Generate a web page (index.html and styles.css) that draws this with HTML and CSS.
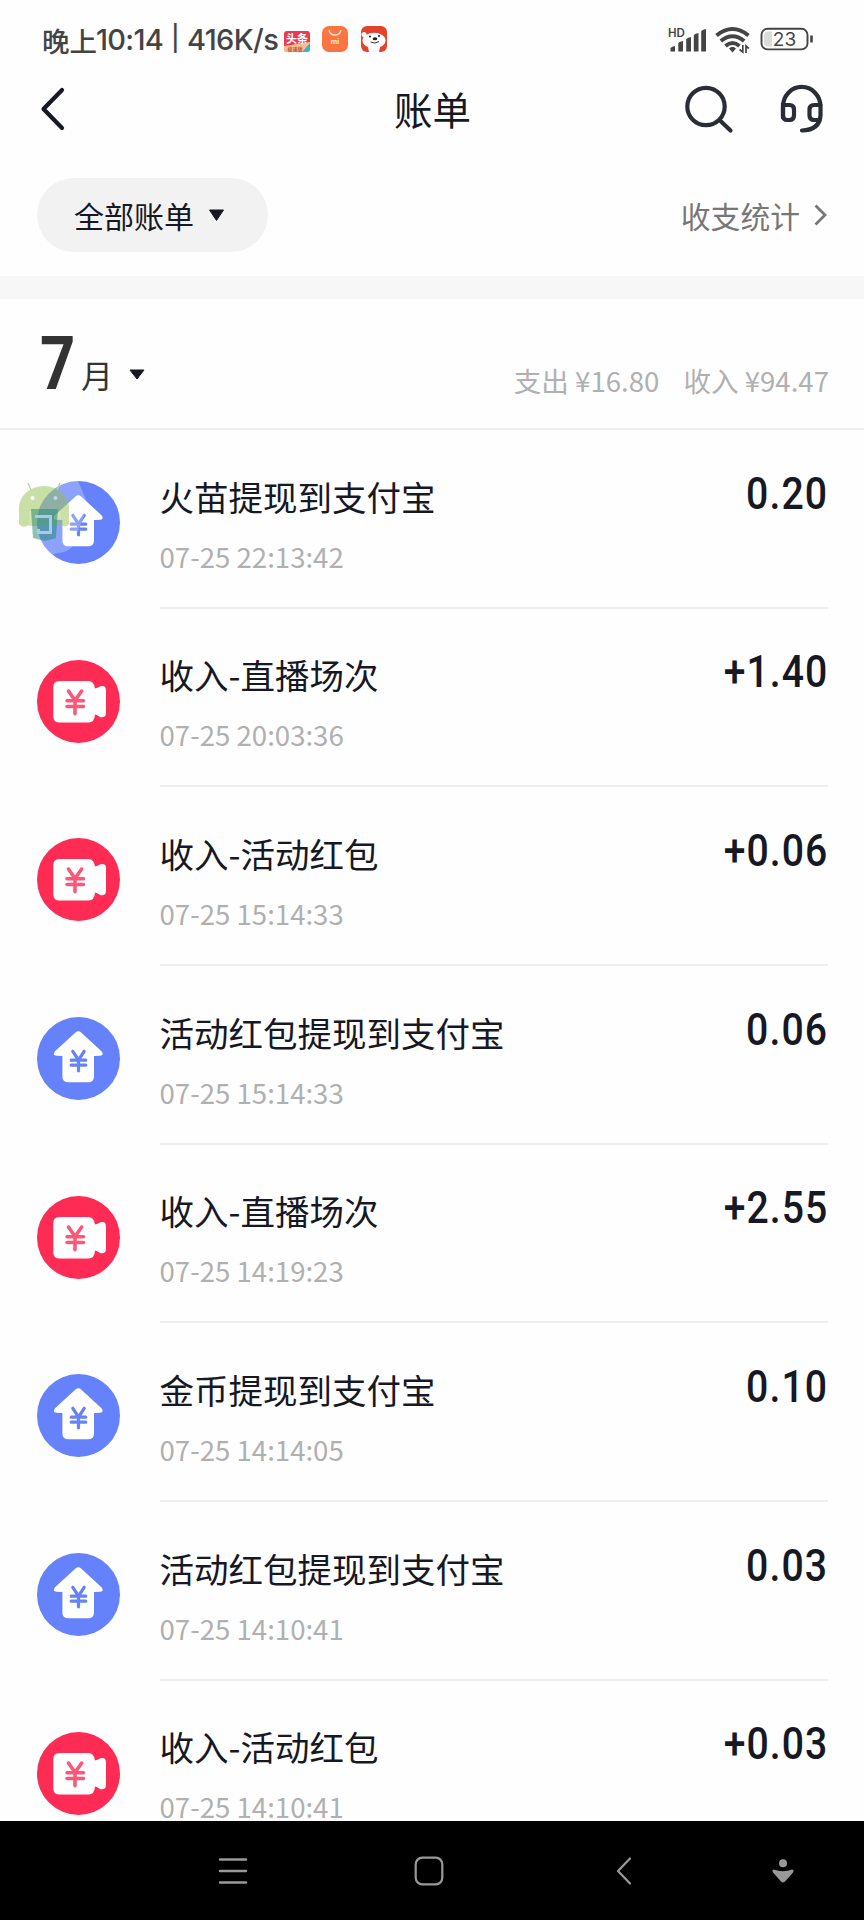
FILE: index.html
```html
<!DOCTYPE html>
<html lang="zh-CN">
<head>
<meta charset="utf-8">
<title>账单</title>
<link rel="stylesheet" href="styles.css">
</head>
<body>
<svg class="defs" aria-hidden="true">
  <symbol id="house" viewBox="0 0 83 83">
    <circle cx="41.5" cy="41.5" r="41.5" fill="#6682fb"/>
    <path d="M38.2 15.7Q41.3 13 44.4 15.7L64.5 34.2Q67.5 38.3 63 38.8L57 39V59.5Q57 65.3 51.2 65.3H31.2Q25.4 65.3 25.4 59.5V39L19.5 38.8Q15 38.3 18 34.2Z" fill="#fff"/>
    <path d="M35.8 34.3L41.5 43L47.2 34.3M41.5 43V53.8M34.2 43.2H48.8M34.2 48.2H48.8" fill="none" stroke="#6682fb" stroke-width="3.2" stroke-linecap="round"/>
  </symbol>
  <symbol id="camera" viewBox="0 0 83 83">
    <circle cx="41.5" cy="41.5" r="41.5" fill="#fe2c55"/>
    <path d="M22.5 21H51.5Q57 21 58 28.5Q60 28.3 63.5 26.3Q69 25 69 30.5V52.5Q69 58.5 63 57Q60 54.5 58 54.5Q57.5 62.6 51.5 62.6H22.5Q16.3 62.6 16.3 56.5V27Q16.3 21 22.5 21Z" fill="#fff"/>
    <path d="M31.5 31L38 40.5L44.7 31M38 40.5V53.8M30 40.8H46.5M30 46.6H46.5" fill="none" stroke="#fb5777" stroke-width="3.5" stroke-linecap="round"/>
  </symbol>
</svg>
<div class="phone">
  <header class="status">
    <div class="status-text"><span class="cn">晚上</span><span class="clock">10:14</span><span class="bar">|</span><span class="speed">416K/s</span></div>
    <svg class="apps" width="103" height="26" viewBox="0 0 103 26">
      <rect y="5" width="26" height="21" rx="3" fill="#ee3850"/>
      <path d="M0 20L26 16V23Q26 26 23 26H3Q0 26 0 23Z" fill="#f8bd91"/>
      <path d="M18 26L26 17V23Q26 26 23 26Z" fill="#35b6cd"/>
      <text x="13" y="16.5" class="app-news" text-anchor="middle">头条</text>
      <text x="11" y="24.8" class="app-sub" text-anchor="middle">极速版</text>
      <rect x="38" width="26" height="26" rx="7" fill="#fa7541"/>
      <path d="M45 4Q46 9 51 9Q56 9 57 4" fill="none" stroke="#ffe0cc" stroke-width="1.3"/>
      <text x="51" y="17.5" class="app-mi" text-anchor="middle">mi</text>
      <rect x="77" width="26" height="26" rx="6" fill="#e5412d"/>
      <ellipse cx="90" cy="14.5" rx="11.5" ry="7.8" fill="#fff"/>
      <circle cx="80" cy="8.5" r="2.5" fill="#fff"/>
      <path d="M84 21H96L95 26H85Z" fill="#fff"/>
      <circle cx="86" cy="10.5" r="1.1" fill="#222"/><circle cx="95" cy="10" r="1.1" fill="#222"/>
      <ellipse cx="91" cy="12.7" rx="2.3" ry="1.5" fill="#222"/>
      <path d="M86.5 16Q91 18.5 95 15.5" fill="none" stroke="#333"/>
    </svg>
    <svg class="signals" width="146" height="30" viewBox="0 0 146 30">
      <text x="0" y="11" class="hd">HD</text>
      <g fill="#444">
        <path d="M2.5 25.5V22Q4 20.5 7 20V25.5ZM10.3 25.5V17Q12 15.5 15 15V25.5ZM18.2 25.5V13Q20 11.5 23 11V25.5ZM25.8 25.5V9Q27.5 7.5 30.5 7V25.5ZM33.2 25.5V5Q35 3.5 38 3V25.5Z"/>
      </g>
      <g fill="none" stroke="#444" stroke-width="4">
        <path d="M48.5 9.5Q64.5 -3.5 80.5 9.5M52.8 15Q64.5 5.5 76.2 15M57.5 20Q64.5 14 71.5 20"/>
      </g>
      <path d="M61 22.5Q64.5 19 68 22.5L64.5 26.5Z" fill="#444"/>
      <path d="M74.8 19V26L71.5 23.5M78 27V20L80.8 22.5" fill="none" stroke="#444" stroke-width="1.7"/>
      <rect x="93.5" y="2.8" width="46" height="20.6" rx="6" fill="none" stroke="#444" stroke-width="1.9"/>
      <path d="M100 5.5H104V20.5H100Q96 20.5 96 16.5V9.5Q96 5.5 100 5.5Z" fill="#dcdcdc"/>
      <text x="116.5" y="19.6" class="level" text-anchor="middle">23</text>
      <path d="M143.5 9.5V16.5" stroke="#444" stroke-width="2.6"/>
    </svg>
  </header>

  <nav class="titlebar">
    <svg class="back" width="26" height="44" viewBox="0 0 26 44"><path d="M22 3L3.5 22L22 41" fill="none" stroke="#161823" stroke-width="4.2" stroke-linecap="round" stroke-linejoin="round"/></svg>
    <h1 class="title">账单</h1>
    <svg class="tools" width="138" height="50" viewBox="0 0 138 50" fill="none" stroke="#2a2c37" stroke-width="4.2" stroke-linecap="round">
      <circle cx="19" cy="21.5" r="18.7"/><path d="M33 35.5L43.5 45.5"/>
      <path d="M96 32.5V21.5A18.7 19.5 0 0 1 133.5 21.5V30.5Q132.500 45 115 45.5"/>
      <path d="M96 20H102.5Q107 20 107 24.5V30.5Q107 35 102.5 35H100Q96 35 96 30.5ZM133.5 20H127Q122.5 20 122.5 24.5V30.5Q122.5 35 127 35H132.5"/>
    </svg>
  </nav>

  <section class="filters">
    <div class="pill"><span>全部账单</span><svg width="17" height="13" viewBox="0 0 17 13"><path d="M1.5 1H15.5L8.5 11.5Z" fill="#161823" stroke="#161823" stroke-linejoin="round"/></svg></div>
    <div class="stats"><span>收支统计</span><svg width="14" height="24" viewBox="0 0 14 24"><path d="M1.5 2.5L11 12L1.5 21.5" fill="none" stroke="#777" stroke-width="2.8"/></svg></div>
  </section>

  <section class="month">
    <div class="month-pick"><span class="num">7</span><span class="unit">月</span><svg width="16" height="11" viewBox="0 0 16 11"><path d="M1 1H15L8 10Z" fill="#161823" stroke="#161823" stroke-linejoin="round"/></svg></div>
    <div class="totals"><span>支出 ¥16.80</span><span>收入 ¥94.47</span></div>
  </section>

  <main class="list">
    <article class="row"><svg class="icon"><use href="#house"/></svg><div class="body"><div class="info"><div class="name">火苗提现到支付宝</div><div class="time">07-25 22:13:42</div></div><div class="amount">0.20</div></div>
      <svg class="floating" width="80" height="90" viewBox="15 478 80 90">
        <defs><clipPath id="disc"><circle cx="78.5" cy="522.5" r="41.5"/></clipPath></defs>
        <path d="M35 478H77L88 505L72 547Q66 555 35 555Z" fill="#fff" opacity=".26" clip-path="url(#disc)"/>
        <path d="M19 524V508A25 22 0 0 1 69 508V524Q65 529 61 524V511H29V525Q23 529 19 524Z" fill="#8fbf45" opacity=".48"/>
        <path d="M29 511H61V526H29Z" fill="#8fbf45" opacity=".4"/>
        <path d="M31 490L28 483M57 490L60 483" stroke="#b8d98b" stroke-width="1.3"/>
        <circle cx="32.5" cy="498" r="2" fill="#fff"/><circle cx="55.5" cy="498" r="2" fill="#c1d7f0"/>
        <path d="M31 509H58L56 538L45 541L33 538Z" fill="#258a70" opacity=".52"/>
        <path d="M35 516.5H50.5V532.5H38.500V529" fill="none" stroke="#a9caef" stroke-width="3"/>
      </svg>
    </article>
    <article class="row"><svg class="icon"><use href="#camera"/></svg><div class="body"><div class="info"><div class="name">收入-直播场次</div><div class="time">07-25 20:03:36</div></div><div class="amount">+1.40</div></div></article>
    <article class="row"><svg class="icon"><use href="#camera"/></svg><div class="body"><div class="info"><div class="name">收入-活动红包</div><div class="time">07-25 15:14:33</div></div><div class="amount">+0.06</div></div></article>
    <article class="row"><svg class="icon"><use href="#house"/></svg><div class="body"><div class="info"><div class="name">活动红包提现到支付宝</div><div class="time">07-25 15:14:33</div></div><div class="amount">0.06</div></div></article>
    <article class="row"><svg class="icon"><use href="#camera"/></svg><div class="body"><div class="info"><div class="name">收入-直播场次</div><div class="time">07-25 14:19:23</div></div><div class="amount">+2.55</div></div></article>
    <article class="row"><svg class="icon"><use href="#house"/></svg><div class="body"><div class="info"><div class="name">金币提现到支付宝</div><div class="time">07-25 14:14:05</div></div><div class="amount">0.10</div></div></article>
    <article class="row"><svg class="icon"><use href="#house"/></svg><div class="body"><div class="info"><div class="name">活动红包提现到支付宝</div><div class="time">07-25 14:10:41</div></div><div class="amount">0.03</div></div></article>
    <article class="row"><svg class="icon"><use href="#camera"/></svg><div class="body"><div class="info"><div class="name">收入-活动红包</div><div class="time">07-25 14:10:41</div></div><div class="amount">+0.03</div></div></article>
  </main>

  <footer class="sysnav">
    <svg width="28" height="28" viewBox="0 0 28 28"><path d="M1 2.5H27M1 14H27M1 25.5H27" stroke="#999" stroke-width="2.4" stroke-linecap="round"/></svg>
    <svg width="30" height="30" viewBox="0 0 30 30"><rect x="1.7" y="1.7" width="26.6" height="26.6" rx="6.5" fill="none" stroke="#999" stroke-width="2.2"/></svg>
    <svg width="16" height="28" viewBox="0 0 16 28"><path d="M14 1.5L2 14L14 26.5" fill="none" stroke="#999" stroke-width="2.2" stroke-linecap="round" stroke-linejoin="round"/></svg>
    <svg width="22" height="24" viewBox="0 0 22 24"><circle cx="11" cy="4.2" r="4" fill="#999"/><path d="M1.8 10.5Q11 14 20.2 10.5Q22.5 11 21 13.5L13 22.5Q11 24.5 9 22.5L1 13.5Q-.5 11 1.8 10.5Z" fill="#999"/></svg>
  </footer>
</div>
</body>
</html>
```
FILE: styles.css
```css
* { box-sizing: border-box; margin: 0; padding: 0; }
body { background: #fff; font-family: "Noto Sans CJK SC", sans-serif; color: #161823; }
svg { display: block; flex: none; overflow: visible; }
.defs { display: none; }
.phone { width: 864px; height: 1920px; display: flex; flex-direction: column; overflow: hidden; background: #fefefe; }

.status { flex: none; height: 78px; padding: 0 50px 0 42px; display: flex; align-items: flex-start; color: #444; }
.status-text { width: 242px; height: 40px; margin-top: 20px; display: flex; line-height: 40px; white-space: nowrap; font-family: Inter, sans-serif; font-size: 29px; font-weight: 450; }
.cn { width: 54px; font-family: "Noto Sans CJK SC", sans-serif; font-size: 27.5px; }
.clock { width: 75px; letter-spacing: -.7px; }
.bar { width: 16px; font-size: 25px; line-height: 37px; }
.speed { letter-spacing: -.6px; }
.apps { margin-top: 26px; }
.app-news { font: 700 11px "Noto Sans CJK SC", sans-serif; fill: #fff; }
.app-sub { font: 700 5px "Noto Sans CJK SC", sans-serif; fill: #c5543c; }
.app-mi { font: 700 7px Inter, sans-serif; fill: #ffe8dc; }
.signals { margin: 26px 0 0 auto; }
.hd { font: 600 11.5px Inter, sans-serif; fill: #444; }
.level { font: 400 19px Inter, sans-serif; fill: #444; }

.titlebar { flex: none; height: 72px; padding: 0 39px 0 40px; display: grid; grid-template-columns: 138px 1fr 138px; }
.back { margin-top: 9px; }
.title { font-size: 38.5px; font-weight: 400; line-height: 60px; text-align: center; }
.tools { margin-top: 7px; }

.filters { flex: none; height: 149px; padding: 28px 36px 0 37px; display: flex; justify-content: space-between; align-items: flex-start; border-bottom: 23px solid #f7f7f7; }
.pill { width: 231px; height: 74px; padding-left: 37px; display: flex; align-items: center; gap: 14px; border-radius: 37px; background: #f2f2f2; font-size: 30px; line-height: 70px; }
.stats { height: 74px; display: flex; align-items: center; gap: 14px; color: #777; font-size: 29.8px; line-height: 70px; }

.month { flex: none; height: 131px; padding: 0 35px 0 40px; display: flex; justify-content: space-between; border-bottom: 2px solid #efefef; }
.month-pick { display: flex; align-items: flex-start; color: #333; }
.num { width: 41px; margin-top: 20px; font: 700 74px/90px Roboto, sans-serif; transform: scaleX(.83); transform-origin: left; }
.unit { width: 48px; margin-top: 53px; font-size: 32px; line-height: 44px; }
.month-pick svg { margin-top: 70px; }
.totals { display: flex; gap: 24px; margin-top: 61px; color: #b0b0b0; font-size: 27.6px; line-height: 40px; white-space: pre; }

.list { flex: 1; min-height: 0; overflow: hidden; }
.row { position: relative; height: 178.67px; padding: 0 36px 0 37px; display: flex; gap: 39.5px; }
.icon { width: 83px; height: 83px; margin-top: 51px; }
.body { flex: 1; display: flex; justify-content: space-between; border-bottom: 2px solid #efefef; }
.info { padding-top: 40.6px; }
.name { font-size: 34.5px; line-height: 50px; white-space: nowrap; }
.time { margin-top: 15px; font-size: 27.6px; line-height: 40px; color: #b0b0b0; white-space: nowrap; }
.amount { margin: 39.6px 0 0; font: 500 43.5px/50px Roboto, sans-serif; letter-spacing: 1.2px; transform: scaleX(.9); transform-origin: right; }
.floating { position: absolute; left: 15px; top: 48px; }

.sysnav { flex: none; height: 99px; padding: 0 70px 0 219px; display: grid; grid-template-columns: 195px 202px 156px 22px; align-items: center; background: #000; }
```
